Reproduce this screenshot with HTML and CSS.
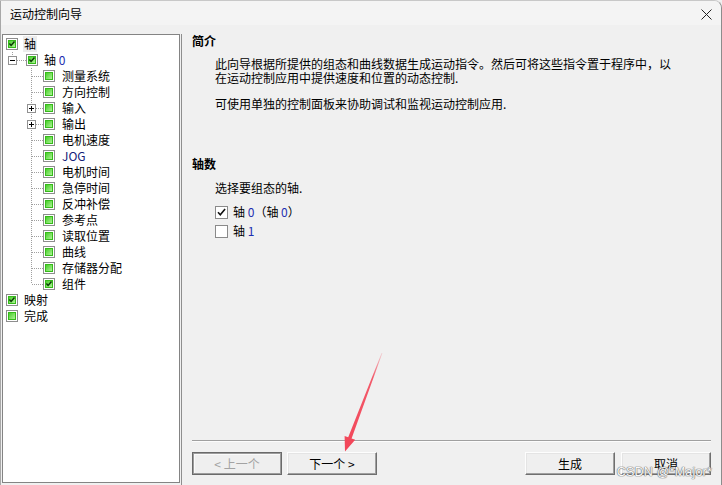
FILE: index.html
```
<!DOCTYPE html>
<html lang="zh-CN">
<head>
<meta charset="utf-8">
<title>运动控制向导</title>
<link rel="stylesheet" href="styles.css">
</head>
<body>
<svg class="defs" width="0" height="0" aria-hidden="true">
  <defs>
    <linearGradient id="gg" x1="0" y1="0" x2="1" y2="1">
      <stop offset="0" stop-color="#3fcb20"/>
      <stop offset="1" stop-color="#b6f6a0"/>
    </linearGradient>
    <linearGradient id="ar" x1="0" y1="0" x2="0" y2="1">
      <stop offset="0" stop-color="#f34a5c" stop-opacity="0.2"/>
      <stop offset="0.25" stop-color="#f34a5c" stop-opacity="0.9"/>
      <stop offset="1" stop-color="#f24457"/>
    </linearGradient>
    <symbol id="cb" viewBox="0 0 12 12">
      <rect x="0.5" y="0.5" width="11" height="11" fill="#fff" stroke="#8e8e8e"/>
      <rect x="2.5" y="2.5" width="7" height="7" fill="url(#gg)" stroke="#36bb1b"/>
    </symbol>
    <symbol id="cbon" viewBox="0 0 12 12">
      <rect x="0.5" y="0.5" width="11" height="11" fill="#fff" stroke="#8e8e8e"/>
      <rect x="2.5" y="2.5" width="7" height="7" fill="url(#gg)" stroke="#36bb1b"/>
      <path d="M3.4 5.6l1.7 1.8 3.4-3.9" fill="none" stroke="#0d3a06" stroke-width="1.5"/>
    </symbol>
    <symbol id="minus" viewBox="0 0 9 9">
      <rect x="0.5" y="0.5" width="8" height="8" fill="#fff" stroke="#919191"/>
      <path d="M2 4.5h5" stroke="#000"/>
    </symbol>
    <symbol id="plus" viewBox="0 0 9 9">
      <rect x="0.5" y="0.5" width="8" height="8" fill="#fff" stroke="#919191"/>
      <path d="M2 4.5h5M4.5 2v5" stroke="#000"/>
    </symbol>
  </defs>
</svg>

<div class="window">
  <div class="titlebar">
    <span class="title">运动控制向导</span>
    <svg class="close" width="11" height="11" viewBox="0 0 11 11"><path d="M0.5 0.5l10 10M10.5 0.5l-10 10" stroke="#222" stroke-width="1"/></svg>
  </div>

  <div class="main">
    <div class="tree">
      <div class="row r0"><svg class="cb"><use href="#cbon"/></svg><span class="lbl sel">轴</span></div>
      <div class="row r1"><svg class="exp"><use href="#minus"/></svg><span class="hdot w9"></span><svg class="cb"><use href="#cbon"/></svg><span class="lbl">轴 <span class="num">0</span></span></div>
      <div class="kids">
        <div class="row r2"><span class="hdot w11"></span><svg class="cb"><use href="#cb"/></svg><span class="lbl">测量系统</span></div>
        <div class="row r2"><span class="hdot w11"></span><svg class="cb"><use href="#cb"/></svg><span class="lbl">方向控制</span></div>
        <div class="row r2 x"><svg class="exp"><use href="#plus"/></svg><span class="hdot w7"></span><svg class="cb"><use href="#cb"/></svg><span class="lbl">输入</span></div>
        <div class="row r2 x"><svg class="exp"><use href="#plus"/></svg><span class="hdot w7"></span><svg class="cb"><use href="#cb"/></svg><span class="lbl">输出</span></div>
        <div class="row r2"><span class="hdot w11"></span><svg class="cb"><use href="#cb"/></svg><span class="lbl">电机速度</span></div>
        <div class="row r2"><span class="hdot w11"></span><svg class="cb"><use href="#cb"/></svg><span class="lbl jog">JOG</span></div>
        <div class="row r2"><span class="hdot w11"></span><svg class="cb"><use href="#cb"/></svg><span class="lbl">电机时间</span></div>
        <div class="row r2"><span class="hdot w11"></span><svg class="cb"><use href="#cb"/></svg><span class="lbl">急停时间</span></div>
        <div class="row r2"><span class="hdot w11"></span><svg class="cb"><use href="#cb"/></svg><span class="lbl">反冲补偿</span></div>
        <div class="row r2"><span class="hdot w11"></span><svg class="cb"><use href="#cb"/></svg><span class="lbl">参考点</span></div>
        <div class="row r2"><span class="hdot w11"></span><svg class="cb"><use href="#cb"/></svg><span class="lbl">读取位置</span></div>
        <div class="row r2"><span class="hdot w11"></span><svg class="cb"><use href="#cb"/></svg><span class="lbl">曲线</span></div>
        <div class="row r2"><span class="hdot w11"></span><svg class="cb"><use href="#cb"/></svg><span class="lbl">存储器分配</span></div>
        <div class="row r2"><span class="hdot w11"></span><svg class="cb"><use href="#cbon"/></svg><span class="lbl">组件</span></div>
      </div>
      <div class="row r0"><svg class="cb"><use href="#cbon"/></svg><span class="lbl">映射</span></div>
      <div class="row r0"><svg class="cb"><use href="#cb"/></svg><span class="lbl">完成</span></div>
    </div>

    <div class="panel">
      <div class="content">
        <h2 class="head">简介</h2>
        <p class="para p1">此向导根据所提供的组态和曲线数据生成运动指令。然后可将这些指令置于程序中，以</p>
        <p class="para">在运动控制应用中提供速度和位置的动态控制.</p>
        <p class="para p2">可使用单独的控制面板来协助调试和监视运动控制应用.</p>

        <h2 class="head h-axes">轴数</h2>
        <p class="para p3">选择要组态的轴.</p>
        <div class="opts">
          <label class="opt"><svg class="chk" width="13" height="13" viewBox="0 0 13 13"><rect x="0.5" y="0.5" width="12" height="12" fill="#fff" stroke="#8a8a8a"/><path d="M3 6.2l2.3 2.5 4.8-5.6" fill="none" stroke="#111" stroke-width="1.6"/></svg><span>轴 <span class="num">0</span>（轴 <span class="num">0</span>）</span></label>
          <label class="opt"><svg class="chk" width="13" height="13" viewBox="0 0 13 13"><rect x="0.5" y="0.5" width="12" height="12" fill="#fff" stroke="#8a8a8a"/></svg><span>轴 <span class="num">1</span></span></label>
        </div>
      </div>
      <div class="footer">
        <div class="sep"></div>
        <div class="buttons">
          <div class="group">
            <button class="btn dis" disabled>&lt; 上一个</button>
            <button class="btn">下一个 &gt;</button>
          </div>
          <div class="group">
            <button class="btn">生成</button>
            <button class="btn">取消</button>
          </div>
        </div>
      </div>
    </div>
  </div>

  <svg class="arrow" width="722" height="485" viewBox="0 0 722 485">
    <polygon fill="url(#ar)" points="381.6,352.9 382.4,353.1 351.6,438.5 355.2,439.8 345,451.5 344.6,436 348.2,437.3"/>
  </svg>
  <div class="watermark">CSDN @*Major*</div>
</div>
</body>
</html>
```

FILE: styles.css
```
html, body {
  margin: 0;
  padding: 0;
}
body {
  width: 722px;
  height: 485px;
  overflow: hidden;
  background: #f0f0f0;
  font-family: "Noto Sans CJK SC", "Liberation Sans", sans-serif;
  font-size: 12px;
  color: #000;
}
.defs {
  position: absolute;
  width: 0;
  height: 0;
}
.window {
  position: relative;
  width: 722px;
  height: 485px;
  box-sizing: border-box;
  border-left: 1px solid #a8a8a8;
  border-right: 1px solid #8c8c8c;
  border-top: 1px solid #c8c8c8;
  border-top-right-radius: 8px;
  background: #f0f0f0;
  display: flex;
  flex-direction: column;
  overflow: hidden;
}
.titlebar {
  height: 24px;
  flex: none;
  background: #f4f4f4;
  display: flex;
  align-items: center;
  justify-content: space-between;
  padding: 0 9px 0 9px;
}
.title {
  line-height: 14px;
  padding-top: 1px;
}
.close {
  margin-top: 3px;
}

.main {
  flex: 1;
  display: flex;
  padding-top: 9px;
  min-height: 0;
}

/* ---------- tree ---------- */
.tree {
  width: 178px;
  height: 449px;
  box-sizing: border-box;
  margin-left: 1px;
  border: 1px solid #848484;
  background: #fff;
  padding-top: 1px;
  flex: none;
}
.row {
  height: 16px;
  display: flex;
  align-items: center;
}
.r0 { padding-left: 3px; }
.r1 {
  padding-left: 5px;
  background-image: repeating-linear-gradient(to bottom, #a0a0a0 0 1px, transparent 1px 2px);
  background-repeat: no-repeat;
  background-size: 1px 5px;
  background-position: 9px 0;
}
.r2 { padding-left: 29px; }
.r2.x { padding-left: 24px; }
.kids {
  background-image: repeating-linear-gradient(to bottom, #a0a0a0 0 1px, transparent 1px 2px);
  background-repeat: no-repeat;
  background-size: 1px calc(100% - 8px);
  background-position: 28px 0;
}
.cb {
  width: 12px;
  height: 12px;
  flex: none;
}
.exp {
  width: 9px;
  height: 9px;
  flex: none;
}
.hdot {
  height: 1px;
  flex: none;
  background-image: repeating-linear-gradient(to right, #a0a0a0 0 1px, transparent 1px 2px);
}
.w7 { width: 7px; }
.w9 { width: 9px; }
.w11 { width: 11px; }
.lbl {
  margin-left: 6px;
  line-height: 16px;
  white-space: nowrap;
}
.r2 .lbl { margin-left: 7px; }
.lbl.sel {
  background: #ececec;
  margin-left: 5px;
  padding: 0 1px;
}
.num { color: #1d2fb0; }
.jog { color: #14207a; }

/* ---------- right panel ---------- */
.panel {
  flex: 1;
  display: flex;
  flex-direction: column;
  border-left: 1px solid #8e8e8e;
  margin-left: 1px;
  padding: 0 10px 10px 10px;
  min-width: 0;
}
.content {
  flex: 1;
}
.head {
  margin: 0;
  font-size: 12px;
  font-weight: bold;
  line-height: 14px;
}
.para {
  margin: 0 0 0 23px;
  line-height: 14px;
  white-space: nowrap;
}
.p1 { margin-top: 9px; }
.p2 { margin-top: 12px; }
.h-axes { margin-top: 46px; }
.p3 { margin-top: 10px; }
.opts {
  margin: 10px 0 0 23px;
  display: flex;
  flex-direction: column;
  gap: 5px;
}
.opt {
  display: flex;
  align-items: center;
  gap: 5px;
  height: 14px;
  line-height: 14px;
}
.chk { flex: none; }

.footer {
  flex: none;
}
.sep {
  height: 1px;
  background: #a0a0a0;
  border-bottom: 1px solid #fcfcfc;
  margin-bottom: 10px;
}
.buttons {
  display: flex;
  justify-content: space-between;
}
.group {
  display: flex;
  gap: 6px;
}
.group:first-child {
  gap: 5px;
}
.btn {
  width: 90px;
  height: 23px;
  box-sizing: border-box;
  font: inherit;
  font-size: 12px;
  color: #000;
  background: #efefef;
  border: 1px solid;
  border-color: #fdfdfd #6f6f6f #6f6f6f #fdfdfd;
  box-shadow: inset -1px -1px 0 #a0a0a0, inset 1px 1px 0 #e4e4e4;
  padding: 0;
  line-height: 20px;
}
.btn.dis {
  color: #a3a3a3;
  border: 1px solid #6a6a6a;
  box-shadow: inset 0 0 0 1px #9c9c9c, inset 2px 2px 0 #fafafa;
}

/* ---------- overlays ---------- */
.arrow {
  position: absolute;
  left: -1px;
  top: -1px;
  pointer-events: none;
}
.watermark {
  position: absolute;
  right: 9px;
  bottom: 6px;
  font-family: "Liberation Sans", sans-serif;
  font-size: 12.5px;
  color: #fafafa;
  text-shadow: 0 0 1px #6f6f6f, 0 0 1px #6f6f6f, 0 0 1px #6f6f6f;
  letter-spacing: 0.2px;
  pointer-events: none;
}
```
